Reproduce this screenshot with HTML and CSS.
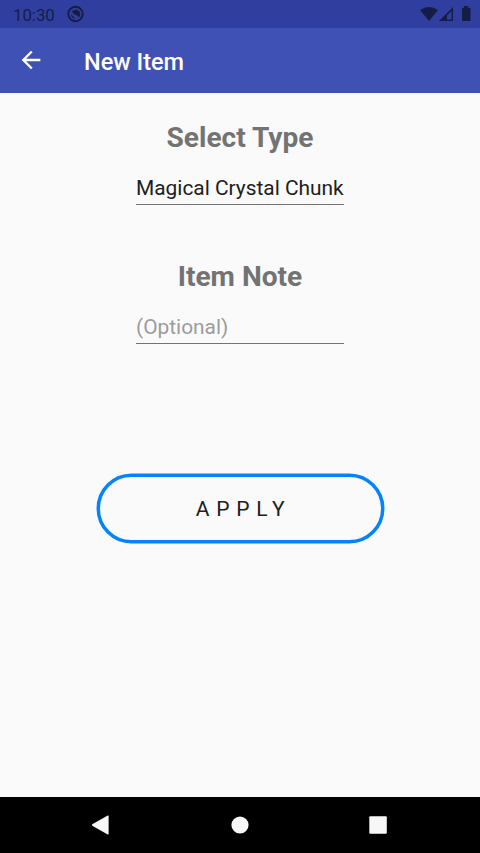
FILE: index.html
```html
<!DOCTYPE html>
<html lang="en">
<head>
<meta charset="utf-8">
<title>New Item</title>
<link rel="stylesheet" href="styles.css">
</head>
<body>
<header class="status">
  <span class="clock">10:30</span>
  <svg class="notice" viewBox="0 0 18 18"><circle cx="8.500" cy="9" r="7.200" fill="none" stroke="currentColor" stroke-width="1.900"/><path d="M4.300 7.200A4.800 4.800 0 0 1 13.300 9.500L12 12.600L9.500 10L8 10L5.600 7.400z" fill="currentColor"/><path d="M4 9.200L8.500 13.700A4.600 4.600 0 0 1 4 9.200z" fill="currentColor"/></svg>
  <svg class="signals" viewBox="0 0 52 18"><path d="M0 5Q9-1 18 5L9 16z" fill="currentColor"/><path d="M33 2v14H19zM31.500 6L27 10.500V14.500h4.500z" fill="currentColor" fill-rule="evenodd"/><path d="M42 3.500q0-.8.8-.8H44V1h4v1.700h1.700q.8 0 .8.8v11.700q0 .8-.8.8h-6.900q-.8 0-.8-.8z" fill="currentColor"/></svg>
</header>
<div class="toolbar">
  <svg class="back" viewBox="0 0 24 24"><path d="M20 11H7.830l5.590-5.590L12 4l-8 8 8 8 1.410-1.410L7.830 13H20z" fill="currentColor"/></svg>
  <h1 class="title">New Item</h1>
</div>
<main class="form">
  <h2 class="label">Select Type</h2>
  <div class="field">Magical Crystal Chunk</div>
  <h2 class="label second">Item Note</h2>
  <div class="field hint">(Optional)</div>
  <button class="apply">
    <svg class="outline" viewBox="0 0 290 72"><rect x="3.250" y="2.250" width="284.500" height="66.600" rx="33.300" fill="none" stroke="#0583fb" stroke-width="3.500"/></svg>
    <span>APPLY</span>
  </button>
</main>
<nav class="nav">
  <svg viewBox="0 0 24 24"><path d="M2.300 11.300L17.700 2.600q.9-.4.9.6v17.600q0 1-.9.600L2.300 12.700q-1-.7 0-1.400z" fill="currentColor"/></svg>
  <svg viewBox="0 0 24 24"><circle cx="12" cy="12" r="8.600" fill="currentColor"/></svg>
  <svg viewBox="0 0 24 24"><rect x="3.300" y="3.200" width="17.500" height="17.600" rx="1" fill="currentColor"/></svg>
</nav>
</body>
</html>
```
FILE: styles.css
```css
* { box-sizing: border-box; }
body { margin: 0; height: 853px; display: flex; flex-direction: column; background: #fafafa; font-family: Roboto, sans-serif; overflow: hidden; }
.status { height: 28px; flex: none; display: flex; align-items: center; padding: 0 8px 0 13px; background: #303f9f; color: #151c46; }
.clock { font-size: 16.800px; line-height: 28px; width: 54px; padding-top: 1px; }
.notice { width: 18px; height: 18px; }
.signals { width: 52px; height: 18px; margin-left: auto; }
.toolbar { height: 65px; flex: none; display: flex; align-items: center; padding-left: 17px; background: #3f51b5; color: #fff; }
.back { width: 28px; height: 28px; margin-bottom: 1px; }
.title { margin: 2px 0 0 39px; font-size: 23.500px; line-height: 28px; font-weight: 500; }
.form { flex: 1; display: flex; flex-direction: column; align-items: center; padding-top: 26px; }
.label { margin: 0; font-size: 28.100px; line-height: 38px; font-weight: 700; color: #737373; }
.second { margin-top: 53px; }
.field { width: 208px; height: 36px; margin-top: 12px; padding-top: 7px; border-bottom: 1px solid #737373; font-size: 20.900px; line-height: 24px; white-space: nowrap; color: #202020; }
.second + .field { height: 37px; margin-top: 11px; padding-top: 8px; }
.hint { color: #9c9c9c; }
.apply { position: relative; width: 290px; height: 72px; margin-top: 129px; padding: 0 0 0 7px; border: 0; background: transparent; color: #202020; font: 400 21px Roboto, sans-serif; letter-spacing: 6.800px; }
.outline { position: absolute; left: 0; top: 0; width: 290px; height: 72px; }
.nav { height: 56px; flex: none; display: flex; justify-content: center; align-items: center; gap: 114px; background: #000; color: #f7f7f7; }
.nav svg { width: 24px; height: 24px; }
```
